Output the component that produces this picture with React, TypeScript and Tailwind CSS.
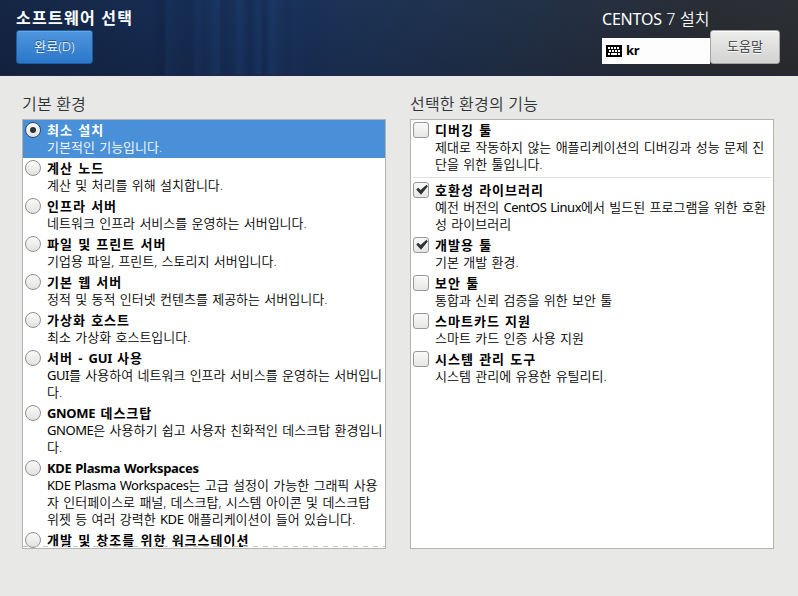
type Item = { title: string; lines: string[]; on?: boolean; divider?: boolean };

const environments: Item[] = [
  { title: '최소 설치', lines: ['기본적인 기능입니다.'], on: true },
  { title: '계산 노드', lines: ['계산 및 처리를 위해 설치합니다.'] },
  { title: '인프라 서버', lines: ['네트워크 인프라 서비스를 운영하는 서버입니다.'] },
  { title: '파일 및 프린트 서버', lines: ['기업용 파일, 프린트, 스토리지 서버입니다.'] },
  { title: '기본 웹 서버', lines: ['정적 및 동적 인터넷 컨텐츠를 제공하는 서버입니다.'] },
  { title: '가상화 호스트', lines: ['최소 가상화 호스트입니다.'] },
  { title: '서버 - GUI 사용', lines: ['GUI를 사용하여 네트워크 인프라 서비스를 운영하는 서버입니', '다.'] },
  { title: 'GNOME 데스크탑', lines: ['GNOME은 사용하기 쉽고 사용자 친화적인 데스크탑 환경입니', '다.'] },
  {
    title: 'KDE Plasma Workspaces',
    lines: [
      'KDE Plasma Workspaces는 고급 설정이 가능한 그래픽 사용',
      '자 인터페이스로 패널, 데스크탑, 시스템 아이콘 및 데스크탑',
      '위젯 등 여러 강력한 KDE 애플리케이션이 들어 있습니다.',
    ],
  },
  { title: '개발 및 창조를 위한 워크스테이션', lines: [] },
];

const addons: Item[] = [
  { title: '디버깅 툴', lines: ['제대로 작동하지 않는 애플리케이션의 디버깅과 성능 문제 진', '단을 위한 툴입니다.'], divider: true },
  { title: '호환성 라이브러리', lines: ['예전 버전의 CentOS Linux에서 빌드된 프로그램을 위한 호환', '성 라이브러리'], on: true },
  { title: '개발용 툴', lines: ['기본 개발 환경.'], on: true },
  { title: '보안 툴', lines: ['통합과 신뢰 검증을 위한 보안 툴'] },
  { title: '스마트카드 지원', lines: ['스마트 카드 인증 사용 지원'] },
  { title: '시스템 관리 도구', lines: ['시스템 관리에 유용한 유틸리티.'] },
];

// Latin runs are set tighter than the Hangul around them.
function Mixed({ text, hangul, latin }: { text: string; hangul: string; latin: string }) {
  return text.split(/([A-Za-z][A-Za-z ]*[A-Za-z])/).map((part, i) => (
    <span key={i} className={i % 2 ? latin : hangul}>{part}</span>
  ));
}

function Radio({ on }: { on?: boolean }) {
  return (
    <span
      className={`mt-0.5 flex size-4 shrink-0 items-center justify-center rounded-full border bg-linear-to-b from-[#fafafa] to-[#e2e2e0] ${
        on ? 'border-[#294b70]' : 'border-[#90908e]'
      }`}
    >
      {on && <span className="size-1.5 rounded-full bg-[#2e3436]" />}
    </span>
  );
}

function Check({ on }: { on?: boolean }) {
  return (
    <span className="mt-0.5 flex size-4 shrink-0 items-center justify-center rounded-[3px] border border-[#989896] bg-linear-to-b from-[#fafafa] to-[#e6e6e4]">
      {on && (
        <svg viewBox="0 0 14 14" className="size-3.5" fill="#2e3436">
          <path d="M2.2 6.6 4.2 4.8 6.5 7 12.6 1.8 13.8 3.6 7 11.8z" />
        </svg>
      )}
    </span>
  );
}

function Entry({ item, kind }: { item: Item; kind: 'radio' | 'check' }) {
  const selected = kind === 'radio' && item.on;
  return (
    <>
      <div className={`flex gap-1.5 pb-0.5 pl-0.5 ${selected ? 'bg-[#4a90d9] text-white' : ''}`}>
        {kind === 'radio' ? <Radio on={item.on} /> : <Check on={item.on} />}
        <div className="pt-0.5 text-[13px] leading-[17px] whitespace-nowrap">
          <div className="h-[17px] font-bold [word-spacing:0.8px]">
            <Mixed text={item.title} hangul="tracking-[1.02px]" latin="tracking-[-0.32px]" />
          </div>
          {item.lines.map((line) => (
            <div key={line} className="h-[17px] font-[350] [word-spacing:0.95px]">
              <Mixed text={line} hangul="tracking-normal" latin="font-normal tracking-[-0.45px]" />
            </div>
          ))}
        </div>
      </div>
      {item.divider && <div className="mx-0.5 mt-0.5 mb-0.5 h-px bg-[#e0e0de]" />}
    </>
  );
}

function Keyboard() {
  return (
    <svg width="16" height="12" viewBox="0 0 16 12" shapeRendering="crispEdges">
      <rect width="16" height="12" rx="1" fill="#000" />
      <path
        d="M2 2h2v2H2zM5 2h2v2H5zM8 2h2v2H8zM11 2h2v2h-2zM3 5h2v2H3zM6 5h2v2H6zM9 5h2v2H9zM12 5h2v2h-2zM2 8h2v2H2zM5 8h6v2H5zM12 8h2v2h-2z"
        fill="#fff"
      />
    </svg>
  );
}

export default function App() {
  return (
    <div className="h-[596px] w-[798px] overflow-hidden bg-[#e8e8e6] font-['Noto_Sans','Noto_Sans_CJK_KR',sans-serif] text-black">
      <header className="flex h-[76px] justify-between border-b border-[#24244a] bg-[linear-gradient(90deg,transparent_150px,#0a183833_163px,#2450801a_167px,transparent_180px,#0a183822_191px,#2854901a_197px,transparent_205px,#2854902a_218px,#0a18381a_222px,transparent_233px,#28549024_240px,#0a183830_250px,#2854901a_259px,#0a183830_264px,#28549024_272px,transparent_282px,#0a18381a_288px,transparent_294px,#0a183811_310px,transparent_340px),linear-gradient(180deg,#1f4a7a18,#0a102822),linear-gradient(90deg,#14233f_0%,#15294d_20%,#17305a_32%,#1c3050_46%,#202f46_60%,#252d3b_74%,#2b2b2d_90%,#2d2d2d_100%)] pr-[18px] pl-4">
        <div>
          <h1 className="h-[30px] pt-1.5 text-[16px] leading-[24px] font-bold tracking-[1.25px] whitespace-nowrap text-white">소프트웨어 선택</h1>
          <button className="flex h-[34px] w-[77px] items-center justify-center rounded-[3px] border border-[#1c5ba0] bg-linear-to-b from-[#4e96de] to-[#2a76c8] text-[13px] font-[350] text-white inset-shadow-[0_1px_#6aa7e5] text-shadow-[0_-1px_#1c5187]">완료(D)</button>
        </div>
        <div className="w-[178px]">
          <div className="h-[30px] pt-[7px] text-[16px] leading-[24px] font-[350] whitespace-nowrap text-white">
            <Mixed text="CENTOS 7 설치" hangul="tracking-[0.2px]" latin="font-normal tracking-[-0.2px]" />
          </div>
          <div className="flex">
            <div className="mt-2 flex h-[26px] w-[108px] items-center gap-1 bg-[#fdfdfd] pl-1 text-[13px] font-bold tracking-[-0.3px]">
              <Keyboard />kr
            </div>
            <button className="flex h-[34px] w-[70px] items-center justify-center rounded-[3px] border border-[#a4a4a2] bg-linear-to-b from-[#ededeb] to-[#d2d2d0] text-[13px] font-[350] text-[#2e3436] inset-shadow-[0_1px_#fff] text-shadow-[0_1px_#fff]">도움말</button>
          </div>
        </div>
      </header>
      <main className="flex gap-6 px-[22px] pt-4 text-[#2e3436]">
        <section className="w-[364px]">
          <h2 className="h-[27px] text-[16px] leading-[24px] font-[350] tracking-[0.2px]">기본 환경</h2>
          <div className="relative h-[430px] overflow-hidden border border-[#b4b4b1] bg-white text-black">
            {environments.map((e) => <Entry key={e.title} item={e} kind="radio" />)}
            <div className="absolute inset-x-0 bottom-px h-px bg-[repeating-linear-gradient(90deg,#c4c4c4_0_5px,transparent_5px_10px)]" />
          </div>
        </section>
        <section className="w-[364px]">
          <h2 className="h-[27px] text-[16px] leading-[24px] font-[350] tracking-[0.2px]">선택한 환경의 기능</h2>
          <div className="h-[430px] overflow-hidden border border-[#b4b4b1] bg-white text-black">
            {addons.map((a) => <Entry key={a.title} item={a} kind="check" />)}
          </div>
        </section>
      </main>
    </div>
  );
}
